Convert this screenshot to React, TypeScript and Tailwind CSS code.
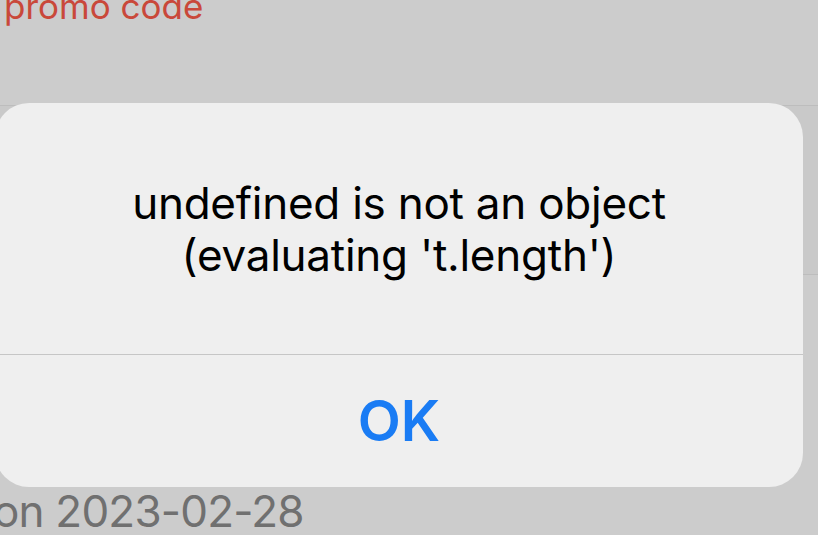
export default function App() {
  return (
    <div
      className="relative w-[818px] h-[535px] overflow-hidden bg-[#cccccc]"
      style={{ fontFamily: "Inter, 'Liberation Sans', sans-serif" }}
    >
      {/* ── Page behind the alert ── */}
      <div className="flex flex-col">
        <div className="h-[106px] border-b border-[#bdbdbd] pl-[4px]">
          <p className="-mt-[16px] text-[35px] leading-[44px] text-[#c9483a]">promo code</p>
        </div>
        <div className="h-[169px] border-b border-[#bdbdbd] bg-[#c9c9c9]" />
        <div className="h-[210px]" />
        <p className="-ml-[7px] text-[44px] leading-[52px] tracking-[-0.8px] text-[#707070]">on 2023-02-28</p>
      </div>

      {/* ── Alert ── */}
      <div className="absolute left-[-5px] top-[103px] w-[808px] h-[384px] rounded-[34px] bg-[#efefef] flex flex-col">
        <div className="h-[252px] border-b border-[#c6c6c6] flex items-center justify-center">
          <p className="text-center text-[44px] leading-[52px] text-black tracking-[-0.25px]">
            undefined is not an object
            <br />
            (evaluating 't.length')
          </p>
        </div>
        <div className="flex-1 flex items-center justify-center">
          <span className="text-[56px] font-semibold leading-none text-[#1a7cf4]">OK</span>
        </div>
      </div>
    </div>
  );
}
